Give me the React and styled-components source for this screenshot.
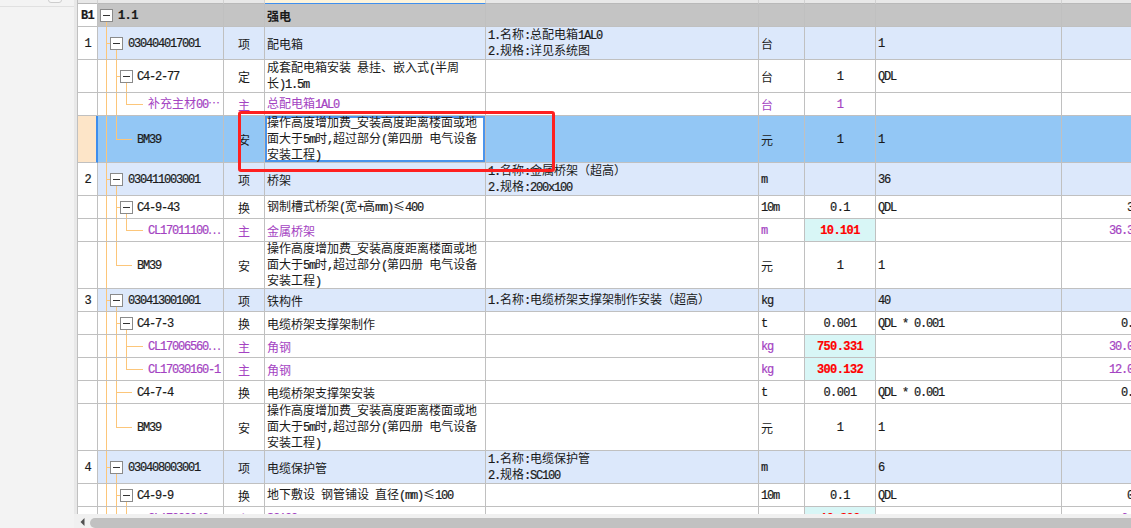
import React from 'react'
import styled, { createGlobalStyle } from 'styled-components'

const GlobalStyle = createGlobalStyle`
  html, body {
    margin: 0;
    padding: 0;
    overflow: hidden;
    background: #ffffff;
  }
  body {
    font-family: "Noto Sans CJK SC", "Liberation Sans", sans-serif;
    font-size: 12px;
    color: #1a1a1a;
  }
`

// column widths measured border to border
const COLS = '20px 126px 41px 221px 273px 46px 71px 186px 86px'
const GRID_LINE = '#c0c0c0'
const PURPLE = '#a443c2'

const ROW_BG = {
  group: '#c4c4c4',
  bill: '#dce8fb',
  plain: '#ffffff',
  sel: '#93c7f5',
}

const Shell = styled.div`
  position: relative;
  display: flex;
  width: 1131px;
  height: 528px;
  overflow: hidden;
`

const SidePanel = styled.aside`
  flex: 0 0 74px;
  background: #f3f3f3;
`

const SideBar = styled.div`
  display: flex;
  height: 6px;
  border-bottom: 1px solid #e0e0e0;
`

const SideKnob = styled.div`
  width: 12px;
  height: 8px;
  margin: -7px 0 0 48px;
  border: 1px solid #cdcdcd;
  border-radius: 3px;
  background: #f8f8f8;
`

const Main = styled.section`
  flex: 1;
  min-width: 0;
  display: flex;
  flex-direction: column;
`

const GridViewport = styled.div`
  flex: 1;
  min-height: 0;
  overflow: hidden;
  border-left: 3px solid #e8e8e8;
`

const Grid = styled.div`
  width: max-content;
  border-left: 1px solid ${GRID_LINE};
`

const HeadStrip = styled.div`
  display: grid;
  grid-template-columns: ${COLS};
  height: 4px;
`

const HeadCell = styled.div`
  box-sizing: border-box;
  background: ${p => (p.$active ? '#fdf4dc' : '#e8e8e8')};
  border-right: 1px solid #d2d2d2;
  border-bottom: 1px solid ${p => (p.$active ? '#3f8fee' : '#b9b9b9')};
`

const Row = styled.div`
  display: grid;
  grid-template-columns: ${COLS};
  height: ${p => p.$h}px;
  background: ${p => ROW_BG[p.$kind]};
`

const Cell = styled.div`
  position: relative;
  display: flex;
  align-items: center;
  min-width: 0;
  padding: 0 2px;
  box-sizing: border-box;
  overflow: hidden;
  border-right: 1px solid ${GRID_LINE};
  border-bottom: 1px solid ${GRID_LINE};
  color: ${p => (p.$purple ? PURPLE : '#1a1a1a')};
`

const NoCell = styled(Cell)`
  justify-content: center;
  background: ${p => (p.$sel ? '#fde5c8' : '#ffffff')};
  border-right: ${p => (p.$sel ? '2px solid #3d8ded' : `1px solid ${GRID_LINE}`)};
`

const TreeCell = styled(Cell)`
  padding-left: ${p => p.$indent}px;
`

const TreeSvg = styled.svg`
  position: absolute;
  left: 0;
  top: 0;
  pointer-events: none;
`

const TypeCell = styled(Cell)`
  justify-content: center;
`

const NameCell = styled(Cell)`
  padding: ${p => (p.$editing ? '0' : '0 2px')};
  align-items: ${p => (p.$editing ? 'stretch' : 'center')};
`

const Editor = styled.div`
  flex: 1;
  display: flex;
  align-items: center;
  background: #ffffff;
  border: 2px solid #4a94ec;
`

const QtyCell = styled(Cell)`
  justify-content: center;
  background: ${p => (p.$hot ? '#d8f6f6' : 'transparent')};
  color: ${p => (p.$hot ? '#ff0000' : p.$purple ? PURPLE : '#1a1a1a')};
  font-weight: ${p => (p.$hot ? 700 : 400)};
`

const TotalCell = styled(Cell)`
  justify-content: flex-end;
`

const CellText = styled.span`
  position: relative;
  display: block;
  white-space: pre;
  line-height: 13px;
  font-weight: ${p => (p.$bold ? 700 : 'inherit')};
`

const Latin = styled.span`
  font-family: "Liberation Mono", "Noto Sans CJK SC", monospace;
  font-size: 12px;
  letter-spacing: -1.2px;
  -webkit-text-stroke: 0.2px currentColor;
  ${CellText}[data-bold] &, ${QtyCell} & {
    letter-spacing: -0.6px;
  }
`

const HScroll = styled.div`
  flex: 0 0 13px;
  display: flex;
  box-sizing: border-box;
  padding-top: 4px;
  background: #f0f0f0;
`

const ScrollArrow = styled.div`
  flex: 0 0 16px;
  display: flex;
  align-items: center;
  justify-content: center;
  margin-top: -2px;
`

const ScrollThumb = styled.div`
  flex: 1;
  height: 10px;
  margin-right: -20px;
  border-radius: 5px;
  background: #c1c1c1;
`

const Callout = styled.div`
  position: absolute;
  left: 238px;
  top: 111px;
  width: 317px;
  height: 61px;
  box-sizing: border-box;
  border: 3px solid #fe2020;
  border-radius: 3px;
  pointer-events: none;
`

const BM_TEXT = '操作高度增加费_安装高度距离楼面或地\n面大于5m时,超过部分(第四册 电气设备\n安装工程)'

const ROWS = [
  { h: 23, kind: 'group', no: 'B1', code: '1.1', indent: 20, tree: { box: 8, below: [8] }, name: '强电' },
  {
    h: 33, kind: 'bill', no: '1', code: '030404017001', indent: 30,
    tree: { full: [8], conn: [8, 12], box: 18, below: [18] },
    type: '项', name: '配电箱', desc: '1.名称:总配电箱1AL0\n2.规格:详见系统图', unit: '台', expr: '1',
  },
  {
    h: 33, kind: 'plain', code: 'C4-2-77', indent: 39,
    tree: { full: [8, 18], conn: [18, 22], box: 28, below: [28] },
    type: '定', name: '成套配电箱安装 悬挂、嵌入式(半周\n长)1.5m', unit: '台', qty: '1', expr: 'QDL',
  },
  {
    h: 23, kind: 'plain', purple: true, code: '补充主材00⋯', indent: 50,
    tree: { full: [8, 18], top: [28], conn: [28, 45] },
    type: '主', name: '总配电箱1AL0', unit: '台', qty: '1',
  },
  {
    h: 47, kind: 'sel', code: 'BM39', indent: 39, editing: true,
    tree: { full: [8], top: [18], conn: [18, 34] },
    type: '安', name: BM_TEXT, unit: '元', qty: '1', expr: '1',
  },
  {
    h: 33, kind: 'bill', no: '2', code: '030411003001', indent: 30,
    tree: { full: [8], conn: [8, 12], box: 18, below: [18] },
    type: '项', name: '桥架', desc: '1.名称:金属桥架（超高）\n2.规格:200x100', unit: 'm', expr: '36',
  },
  {
    h: 23, kind: 'plain', code: 'C4-9-43', indent: 39,
    tree: { full: [8, 18], conn: [18, 22], box: 28, below: [28] },
    type: '换', name: '钢制槽式桥架(宽+高mm)≤400', unit: '10m', qty: '0.1', expr: 'QDL', total: '3.6',
  },
  {
    h: 23, kind: 'plain', purple: true, code: 'CL17011100⋯', indent: 50,
    tree: { full: [8, 18], top: [28], conn: [28, 45] },
    type: '主', name: '金属桥架', unit: 'm', qty: '10.101', hot: true, total: '36.364',
  },
  {
    h: 47, kind: 'plain', code: 'BM39', indent: 39,
    tree: { full: [8], top: [18], conn: [18, 34] },
    type: '安', name: BM_TEXT, unit: '元', qty: '1', expr: '1',
  },
  {
    h: 23, kind: 'bill', no: '3', code: '030413001001', indent: 30,
    tree: { full: [8], conn: [8, 12], box: 18, below: [18] },
    type: '项', name: '铁构件', desc: '1.名称:电缆桥架支撑架制作安装（超高）', unit: 'kg', expr: '40',
  },
  {
    h: 23, kind: 'plain', code: 'C4-7-3', indent: 39,
    tree: { full: [8, 18], conn: [18, 22], box: 28, below: [28] },
    type: '换', name: '电缆桥架支撑架制作', unit: 't', qty: '0.001', expr: 'QDL * 0.001', total: '0.04',
  },
  {
    h: 23, kind: 'plain', purple: true, code: 'CL17006560⋯', indent: 50,
    tree: { full: [8, 18, 28], conn: [28, 45] },
    type: '主', name: '角钢', unit: 'kg', qty: '750.331', hot: true, total: '30.013',
  },
  {
    h: 23, kind: 'plain', purple: true, code: 'CL17030160-1', indent: 50,
    tree: { full: [8, 18], top: [28], conn: [28, 45] },
    type: '主', name: '角钢', unit: 'kg', qty: '300.132', hot: true, total: '12.005',
  },
  {
    h: 23, kind: 'plain', code: 'C4-7-4', indent: 39,
    tree: { full: [8, 18], conn: [18, 34] },
    type: '换', name: '电缆桥架支撑架安装', unit: 't', qty: '0.001', expr: 'QDL * 0.001', total: '0.04',
  },
  {
    h: 47, kind: 'plain', code: 'BM39', indent: 39,
    tree: { full: [8], top: [18], conn: [18, 34] },
    type: '安', name: BM_TEXT, unit: '元', qty: '1', expr: '1',
  },
  {
    h: 33, kind: 'bill', no: '4', code: '030408003001', indent: 30,
    tree: { full: [8], conn: [8, 12], box: 18, below: [18] },
    type: '项', name: '电缆保护管', desc: '1.名称:电缆保护管\n2.规格:SC100', unit: 'm', expr: '6',
  },
  {
    h: 23, kind: 'plain', code: 'C4-9-9', indent: 39,
    tree: { full: [8, 18], conn: [18, 22], box: 28, below: [28] },
    type: '换', name: '地下敷设 钢管铺设 直径(mm)≤100', unit: '10m', qty: '0.1', expr: 'QDL', total: '0.6',
  },
  {
    h: 23, kind: 'plain', purple: true, code: 'CL17000040⋯', indent: 50,
    tree: { full: [8, 18], top: [28], conn: [28, 45] },
    type: '主', name: 'SC100', unit: 'm', qty: '10.300', hot: true, total: '6.18',
  },
]

// split a string into CJK and ASCII runs so the ASCII gets a half-width mono face
function Txt({ children }) {
  if (!children) return null
  return children.split(/([ -~]+)/).map((part, i) =>
    /^[ -~]+$/.test(part) ? <Latin key={i}>{part}</Latin> : <React.Fragment key={i}>{part}</React.Fragment>
  )
}

function TreeArt({ h, full = [], top = [], below = [], conn, box }) {
  const cy = Math.floor(h / 2) + 0.5
  const stroke = '#fcc67a'
  return (
    <TreeSvg width="126" height={h} viewBox={`0 0 126 ${h}`} shapeRendering="crispEdges">
      {full.map(x => <line key={'f' + x} x1={x + 0.5} y1="0" x2={x + 0.5} y2={h} stroke={stroke} />)}
      {top.map(x => <line key={'t' + x} x1={x + 0.5} y1="0" x2={x + 0.5} y2={cy} stroke={stroke} />)}
      {below.map(x => <line key={'b' + x} x1={x + 0.5} y1={cy + 6} x2={x + 0.5} y2={h} stroke={stroke} />)}
      {conn && <line x1={conn[0] + 0.5} y1={cy} x2={conn[1]} y2={cy} stroke={stroke} />}
      {box != null && (
        <g>
          <rect x={box - 5.5} y={cy - 6} width="12" height="12" fill="#ffffff" stroke="#8a8a8a" />
          <line x1={box - 3} y1={cy} x2={box + 4} y2={cy} stroke="#333333" />
        </g>
      )}
    </TreeSvg>
  )
}

function TableRow({ row }) {
  const sel = row.kind === 'sel'
  const bold = row.kind === 'group'
  return (
    <Row $h={row.h} $kind={row.kind}>
      <NoCell $sel={sel}>
        <CellText $bold={bold} data-bold={bold || undefined}><Txt>{row.no}</Txt></CellText>
      </NoCell>
      <TreeCell $indent={row.indent} $purple={row.purple}>
        <TreeArt h={row.h} {...row.tree} />
        <CellText $bold={bold} data-bold={bold || undefined}><Txt>{row.code}</Txt></CellText>
      </TreeCell>
      <TypeCell $purple={row.purple}>
        <CellText><Txt>{row.type}</Txt></CellText>
      </TypeCell>
      <NameCell $purple={row.purple} $editing={row.editing}>
        {row.editing ? (
          <Editor>
            <CellText><Txt>{row.name}</Txt></CellText>
          </Editor>
        ) : (
          <CellText $bold={bold}><Txt>{row.name}</Txt></CellText>
        )}
      </NameCell>
      <Cell>
        <CellText><Txt>{row.desc}</Txt></CellText>
      </Cell>
      <Cell $purple={row.purple}>
        <CellText><Txt>{row.unit}</Txt></CellText>
      </Cell>
      <QtyCell $purple={row.purple} $hot={row.hot}>
        <CellText><Txt>{row.qty}</Txt></CellText>
      </QtyCell>
      <Cell>
        <CellText><Txt>{row.expr}</Txt></CellText>
      </Cell>
      <TotalCell $purple={row.purple}>
        <CellText><Txt>{row.total}</Txt></CellText>
      </TotalCell>
    </Row>
  )
}

export default function App() {
  return (
    <>
      <GlobalStyle />
      <Shell>
        <SidePanel>
          <SideBar>
            <SideKnob />
          </SideBar>
        </SidePanel>
        <Main>
          <GridViewport>
            <Grid>
              <HeadStrip>
                {Array.from({ length: 9 }, (_, i) => <HeadCell key={i} $active={i === 3} />)}
              </HeadStrip>
              {ROWS.map((row, i) => <TableRow key={i} row={row} />)}
            </Grid>
          </GridViewport>
          <HScroll>
            <ScrollArrow>
              <svg width="5" height="8" viewBox="0 0 5 8">
                <path d="M4.5 0 L0.5 4 L4.5 8 Z" fill="#505050" />
              </svg>
            </ScrollArrow>
            <ScrollThumb />
          </HScroll>
        </Main>
        <Callout />
      </Shell>
    </>
  )
}
